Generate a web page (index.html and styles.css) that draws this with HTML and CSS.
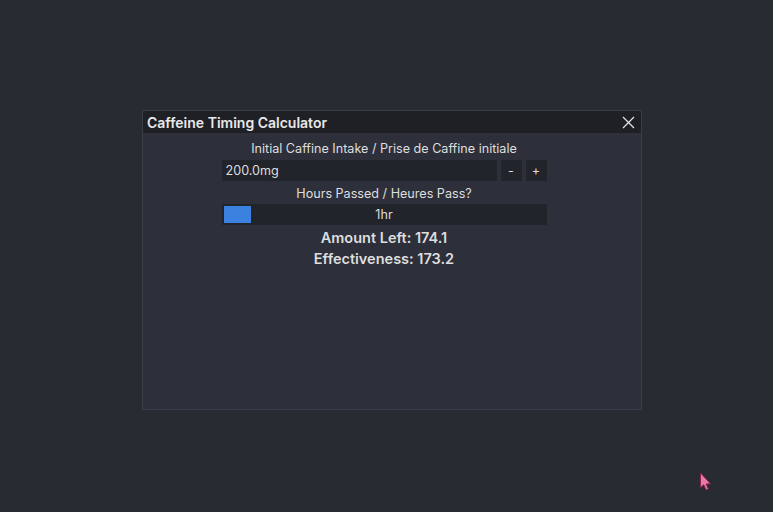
FILE: index.html
```html
<!DOCTYPE html>
<html>
<head>
<meta charset="utf-8">
<link rel="stylesheet" href="styles.css">
</head>
<body>
<div class="window">
  <div class="titlebar">
    <span class="title">Caffeine Timing Calculator</span>
    <svg class="close" width="13" height="13" viewBox="0 0 13 13"><path d="M1 1 L12 12 M12 1 L1 12" stroke="#e6e6e6" stroke-width="1.2" fill="none"/></svg>
  </div>
  <div class="content">
    <div class="label">Initial Caffine Intake / Prise de Caffine initiale</div>
    <div class="inputrow">
      <div class="field">200.0mg</div>
      <div class="btn">-</div>
      <div class="btn">+</div>
    </div>
    <div class="label label2">Hours Passed / Heures Pass?</div>
    <div class="slider">
      <div class="grab"></div>
      <span class="slidertext">1hr</span>
    </div>
    <div class="result first">Amount Left: 174.1</div>
    <div class="result">Effectiveness: 173.2</div>
  </div>
</div>
<svg class="cursor" width="14" height="20" viewBox="0 0 14 20"><path d="M1.5 1 L1.5 15.5 L4.7 12.8 L7.2 18 L9.4 17 L7 12 L11.5 11.8 Z" fill="#e879a8" stroke="#8a2450" stroke-width="1"/></svg>
</body>
</html>
```

FILE: styles.css
```css
html, body {
  margin: 0;
  padding: 0;
  height: 100%;
}
body {
  background: #292b33;
  font-family: Inter, "Noto Sans", sans-serif;
  color: #dedede;
  padding: 110px 0 0 142px;
  box-sizing: border-box;
  position: relative;
  overflow: hidden;
}
.window {
  width: 500px;
  height: 300px;
  box-sizing: border-box;
  border: 1px solid #3b3e49;
  background: #2d303b;
  display: flex;
  flex-direction: column;
}
.titlebar {
  height: 22px;
  background: #1f2026;
  display: flex;
  align-items: center;
  justify-content: space-between;
  padding: 0 6px 0 4px;
}
.title {
  font-size: 14px;
  font-weight: 600;
  color: #e8e8e8;
}
.close {
  display: block;
}
.content {
  display: flex;
  flex-direction: column;
  align-items: center;
  padding-top: 7px;
  padding-right: 16px;
}
.label {
  font-size: 12.6px;
  line-height: 18px;
  height: 18px;
  margin-bottom: 2px;
}
.label2 {
  margin-top: 4px;
  margin-bottom: 1px;
}
.inputrow {
  display: flex;
  gap: 4px;
  width: 325px;
  height: 21px;
}
.field {
  flex: 1;
  background: #22242b;
  font-size: 12.6px;
  line-height: 21px;
  padding-left: 4px;
}
.btn {
  width: 21px;
  background: #22242b;
  font-size: 12.6px;
  line-height: 21px;
  text-align: center;
}
.slider {
  width: 325px;
  height: 21px;
  background: #22242b;
  box-sizing: border-box;
  padding: 2px;
  display: flex;
  align-items: center;
  position: relative;
}
.grab {
  width: 27px;
  height: 17px;
  background: #3b82e0;
}
.slidertext {
  position: absolute;
  left: 0;
  right: 0;
  text-align: center;
  font-size: 12.6px;
  line-height: 21px;
  top: 0;
}
.result {
  font-size: 14.5px;
  font-weight: 600;
  line-height: 21px;
}
.result.first {
  margin-top: 2px;
}
.cursor {
  position: absolute;
  left: 699px;
  top: 472px;
}
```
